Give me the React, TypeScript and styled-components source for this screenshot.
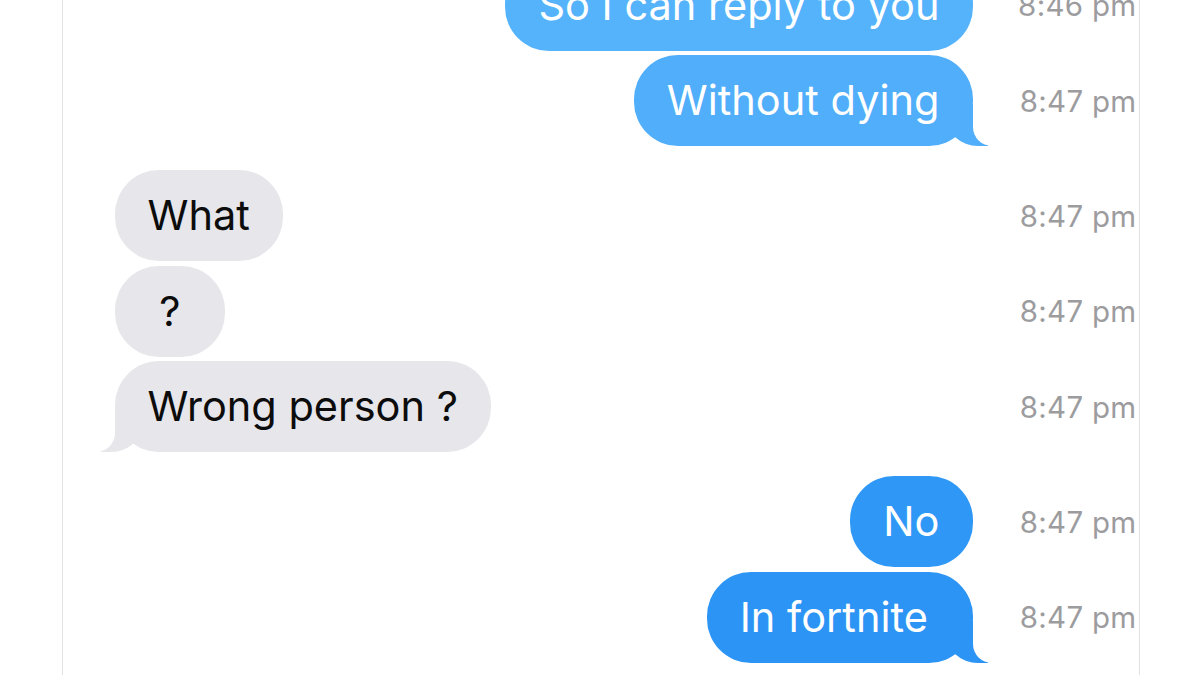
import React from "react";
import styled, { createGlobalStyle, css } from "styled-components";

const GlobalStyle = createGlobalStyle`
  html, body { margin: 0; padding: 0; background: #ffffff; }
  body { font-family: Inter, "Noto Sans", "Liberation Sans", sans-serif; }
  * { box-sizing: border-box; }
`;

const Page = styled.div`
  width: 1200px;
  height: 675px;
  overflow: hidden;
  background: #ffffff;
  display: flex;
  justify-content: center;
`;

const Frame = styled.div`
  width: 1078px;
  height: 675px;
  margin-left: 1px;
  border-left: 1px solid #e2e2e4;
  border-right: 1px solid #e2e2e4;
  padding: 0 2px 0 52px;
  overflow: hidden;
`;

const Thread = styled.div`
  margin-top: -40.5px;
  display: flex;
  flex-direction: column;
  gap: 24px;
`;

const Group = styled.div`
  display: flex;
  flex-direction: column;
  gap: 4.5px;
`;

const Row = styled.div`
  display: flex;
  align-items: center;
  height: 91px;
`;

const BubbleCell = styled.div<{ $out: boolean }>`
  flex: 1;
  display: flex;
  justify-content: ${(p) => (p.$out ? "flex-end" : "flex-start")};
`;

const Bubble = styled.div<{ $out: boolean; $bg: string; $tail: boolean }>`
  position: relative;
  height: 91px;
  line-height: 91px;
  padding: 0 33px;
  border-radius: 44px;
  font-size: 41.5px;
  font-weight: 400;
  white-space: pre;
  background: ${(p) => p.$bg};
  color: ${(p) => (p.$out ? "#ffffff" : "#0c0c0c")};

  ${(p) =>
    p.$tail &&
    (p.$out
      ? css`
          &::before {
            content: "";
            position: absolute;
            bottom: 0;
            right: -15px;
            width: 42px;
            height: 42px;
            background: ${p.$bg};
            border-bottom-left-radius: 32px 30px;
          }
          &::after {
            content: "";
            position: absolute;
            bottom: 0;
            right: -24px;
            width: 24px;
            height: 44px;
            background: #ffffff;
            border-bottom-left-radius: 19px;
          }
        `
      : css`
          &::before {
            content: "";
            position: absolute;
            bottom: 0;
            left: -14px;
            width: 42px;
            height: 42px;
            background: ${p.$bg};
            border-bottom-right-radius: 32px 30px;
          }
          &::after {
            content: "";
            position: absolute;
            bottom: 0;
            left: -24px;
            width: 24px;
            height: 44px;
            background: #ffffff;
            border-bottom-right-radius: 19px;
          }
        `)}
`;

const BubbleText = styled.span`
  position: relative;
  z-index: 1;
`;

const Time = styled.div`
  width: 164px;
  flex: none;
  text-align: right;
  font-size: 29.5px;
  color: #9c9c9f;
  letter-spacing: 0.3px;
`;

type Msg = { text: string; time: string; bg: string; tail?: boolean };
type G = { out: boolean; msgs: Msg[] };

const GRAY = "#e6e6eb";

const groups: G[] = [
  {
    out: true,
    msgs: [
      { text: "So I can reply to you", time: "8:46 pm", bg: "#55b3fb" },
      { text: "Without dying", time: "8:47 pm", bg: "#50aefa", tail: true },
    ],
  },
  {
    out: false,
    msgs: [
      { text: "What", time: "8:47 pm", bg: GRAY },
      { text: " ? ", time: "8:47 pm", bg: GRAY },
      { text: "Wrong person ?", time: "8:47 pm", bg: GRAY, tail: true },
    ],
  },
  {
    out: true,
    msgs: [
      { text: "No", time: "8:47 pm", bg: "#2f98f6" },
      { text: "In fortnite ", time: "8:47 pm", bg: "#2c94f4", tail: true },
    ],
  },
];

export default function App() {
  return (
    <>
      <GlobalStyle />
      <Page>
        <Frame>
          <Thread>
            {groups.map((g, gi) => (
              <Group key={gi}>
                {g.msgs.map((m, mi) => (
                  <Row key={mi}>
                    <BubbleCell $out={g.out}>
                      <Bubble $out={g.out} $bg={m.bg} $tail={!!m.tail}>
                        <BubbleText>{m.text}</BubbleText>
                      </Bubble>
                    </BubbleCell>
                    <Time>{m.time}</Time>
                  </Row>
                ))}
              </Group>
            ))}
          </Thread>
        </Frame>
      </Page>
    </>
  );
}
